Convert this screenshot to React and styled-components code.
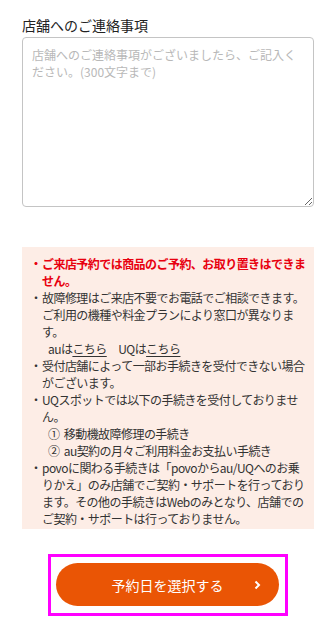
import React from 'react';
import styled, { createGlobalStyle } from 'styled-components';

const GlobalStyle = createGlobalStyle`
  body {
    margin: 0;
    background: #fff;
    font-family: "Noto Sans CJK JP", "Noto Sans", sans-serif;
    color: #333;
  }
`;

const Page = styled.div`
  padding: 15px 16px 0 22px;
`;

const Label = styled.label`
  display: block;
  font-size: 14px;
  line-height: 20px;
  margin-bottom: 2px;
  color: #222;
`;

const Memo = styled.textarea`
  display: block;
  box-sizing: border-box;
  width: 292px;
  height: 170px;
  padding: 8px 9px;
  border: 1px solid #c4c4c4;
  border-radius: 4px;
  font-family: inherit;
  font-size: 12px;
  line-height: 17px;
  color: #333;
  &::placeholder {
    color: #b8b8b8;
  }
`;

const Notice = styled.ul`
  box-sizing: border-box;
  width: 292px;
  margin: 40px 0 0;
  padding: 8px 8px 2px;
  list-style: none;
  background: #fdede6;
  font-size: 12px;
  line-height: 17px;
  letter-spacing: -0.55px;
`;

const Item = styled.li`
  position: relative;
  padding-left: 12px;
  white-space: nowrap;
  color: ${(p) => (p.$alert ? '#e8000f' : '#333')};
  font-weight: ${(p) => (p.$alert ? 700 : 400)};
  &::before {
    content: '・';
    position: absolute;
    left: 0;
    top: 0;
    letter-spacing: 0;
  }
`;

const SubLine = styled.span`
  display: block;
  padding-left: 6px;
`;

const Link = styled.a`
  color: #333;
  text-decoration: underline;
  text-underline-offset: 2px;
`;

const Footer = styled.div`
  display: flex;
  justify-content: flex-start;
  padding: 25px 0 8px 26px;
`;

const FocusRing = styled.div`
  border: 3px solid #ff00ff;
  padding: 6px 6px 7px 5px;
`;

const NextButton = styled.button`
  position: relative;
  display: flex;
  align-items: center;
  justify-content: center;
  width: 223px;
  height: 43px;
  border: none;
  border-radius: 22px;
  background: #ea5505;
  color: #fff;
  font-family: inherit;
  font-size: 14px;
  cursor: pointer;
`;

const Chevron = styled.svg`
  position: absolute;
  right: 18px;
  top: 50%;
  transform: translateY(-50%);
`;

export default function App() {
  return (
    <>
      <GlobalStyle />
      <Page>
        <Label htmlFor="memo">店舗へのご連絡事項</Label>
        <Memo
          id="memo"
          placeholder="店舗へのご連絡事項がございましたら、ご記入ください。(300文字まで)"
        />
        <Notice>
          <Item $alert>
            ご来店予約では商品のご予約、お取り置きはできま<br />せん。
          </Item>
          <Item>
            故障修理はご来店不要でお電話でご相談できます。<br />
            ご利用の機種や料金プランにより窓口が異なりま<br />す。
            <SubLine>
              auは<Link href="#">こちら</Link>　UQは<Link href="#">こちら</Link>
            </SubLine>
          </Item>
          <Item>
            受付店舗によって一部お手続きを受付できない場合<br />がございます。
          </Item>
          <Item>
            UQスポットでは以下の手続きを受付しておりませ<br />ん。
            <SubLine>①&nbsp; 移動機故障修理の手続き</SubLine>
            <SubLine>②&nbsp; au契約の月々ご利用料金お支払い手続き</SubLine>
          </Item>
          <Item>
            povoに関わる手続きは「povoからau/UQへのお乗<br />
            りかえ」のみ店舗でご契約・サポートを行っており<br />
            ます。その他の手続きはWebのみとなり、店舗での<br />
            ご契約・サポートは行っておりません。
          </Item>
        </Notice>
        <Footer>
          <FocusRing>
            <NextButton type="button">
              予約日を選択する
              <Chevron width="7" height="9" viewBox="0 0 7 9">
                <path d="M1.5 1 L5 4.5 L1.5 8" fill="none" stroke="#fff" strokeWidth="2" />
              </Chevron>
            </NextButton>
          </FocusRing>
        </Footer>
      </Page>
    </>
  );
}
